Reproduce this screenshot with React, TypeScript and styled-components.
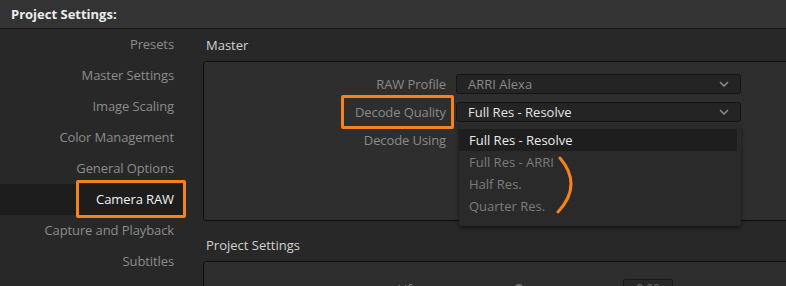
import styled, { createGlobalStyle } from 'styled-components';

const GlobalStyle = createGlobalStyle`
  html, body {
    margin: 0;
    padding: 0;
    background: #282828;
  }
  body {
    font-family: 'Open Sans', 'Noto Sans', sans-serif;
    -webkit-font-smoothing: antialiased;
  }
`;

const ORANGE = '#f5821f';

const SWindow = styled.div`
  display: flex;
  flex-direction: column;
  width: 786px;
  height: 286px;
  overflow: hidden;
  background: #282828;
`;

const STitleBar = styled.div`
  flex: 0 0 28px;
  display: flex;
  align-items: center;
  padding-left: 11px;
  background: #333333;
  border-bottom: 1px solid #141414;
  color: #ececec;
  font-size: 13px;
  font-weight: 700;
`;

const SBody = styled.div`
  flex: 1;
  display: flex;
  min-height: 0;
`;

const SSidebar = styled.ul`
  flex: 0 0 184px;
  margin: 0;
  padding: 0;
  list-style: none;
`;

const SSidebarItem = styled.li<{ $active?: boolean }>`
  height: 31px;
  padding-right: 10px;
  text-align: right;
  line-height: 31px;
  font-size: 13px;
  letter-spacing: -0.1px;
  color: ${({ $active }) => ($active ? '#f2f2f2' : '#8c8c8c')};
  background: ${({ $active }) => ($active ? '#1d1d1d' : 'transparent')};
`;

const SMarked = styled.span`
  position: relative;
  display: inline-block;
`;

const SMarkBox = styled.span<{ $l: number; $r: number; $t: number; $b: number }>`
  position: absolute;
  left: ${({ $l }) => $l}px;
  right: ${({ $r }) => $r}px;
  top: ${({ $t }) => $t}px;
  bottom: ${({ $b }) => $b}px;
  border: 3px solid ${ORANGE};
  border-radius: 2px;
  pointer-events: none;
`;

const SMain = styled.div`
  flex: 1;
  padding-left: 19px;
  min-width: 0;
`;

const SSectionTitle = styled.div<{ $top?: number }>`
  height: 32px;
  margin-top: ${({ $top }) => $top ?? 0}px;
  padding-left: 3px;
  line-height: 32px;
  font-size: 13px;
  color: #d2d2d2;
`;

const SGroup = styled.div<{ $height: number; $padTop: number }>`
  box-sizing: border-box;
  width: 620px;
  height: ${({ $height }) => $height}px;
  padding-top: ${({ $padTop }) => $padTop}px;
  background: #2e2e2e;
  border: 1px solid #0e0e0e;
  border-radius: 3px;
  display: flex;
  flex-direction: column;
  gap: 8px;
`;

const SRow = styled.div`
  display: flex;
  align-items: center;
  gap: 10px;
  height: 20px;
`;

const SLabel = styled.div<{ $width?: number }>`
  flex: 0 0 ${({ $width }) => $width ?? 242}px;
  text-align: right;
  font-size: 13px;
  letter-spacing: -0.1px;
  color: #8a8a8a;
`;

const SSelectWrap = styled.div`
  position: relative;
`;

const SSelect = styled.div<{ $bright?: boolean }>`
  box-sizing: border-box;
  display: flex;
  align-items: center;
  justify-content: space-between;
  width: 285px;
  height: 20px;
  padding: 0 11px;
  background: #242424;
  border: 1px solid #141414;
  border-radius: 3px;
  font-size: 13px;
  color: ${({ $bright }) => ($bright ? '#e4e4e4' : '#8a8a8a')};
`;

const SMenu = styled.ul`
  position: absolute;
  left: 3px;
  top: 22px;
  width: 282px;
  margin: 0;
  padding: 5px 0 9px;
  list-style: none;
  background: #2a2a2a;
  border-radius: 2px;
  box-shadow: 0 2px 4px rgba(0, 0, 0, 0.55);
  z-index: 2;
`;

const SMenuItem = styled.li<{ $active?: boolean }>`
  height: 22px;
  padding-left: 10px;
  margin-right: 4px;
  line-height: 22px;
  font-size: 13px;
  color: ${({ $active }) => ($active ? '#ececec' : '#7c7c7c')};
  background: ${({ $active }) => ($active ? '#1e1e1e' : 'transparent')};
`;

const SArc = styled.svg`
  position: absolute;
  left: 96px;
  top: 31px;
`;

const SSlider = styled.div`
  position: relative;
  flex: 0 0 187px;
  height: 20px;
  display: flex;
  align-items: center;
`;

const STrack = styled.div`
  width: 100%;
  height: 2px;
  background: #1f1f1f;
`;

const SKnob = styled.div`
  position: absolute;
  left: 88px;
  top: 5px;
  width: 10px;
  height: 10px;
  border-radius: 50%;
  background: #6e6e6e;
`;

const SValue = styled.div`
  box-sizing: border-box;
  width: 50px;
  height: 20px;
  border: 1px solid #1a1a1a;
  border-radius: 2px;
  background: #282828;
  text-align: center;
  line-height: 18px;
  font-size: 12px;
  color: #6a6a6a;
`;

const Chevron = () => (
  <svg width="10" height="6" viewBox="0 0 10 6">
    <path d="M1 1 L5 5 L9 1" fill="none" stroke="#8c8c8c" strokeWidth="1.5" />
  </svg>
);

const sidebarItems = [
  'Presets',
  'Master Settings',
  'Image Scaling',
  'Color Management',
  'General Options',
  'Camera RAW',
  'Capture and Playback',
  'Subtitles',
];

const qualityOptions = ['Full Res - Resolve', 'Full Res - ARRI', 'Half Res.', 'Quarter Res.'];

const App = () => {
  return (
    <>
      <GlobalStyle />
      <SWindow>
        <STitleBar>Project Settings:</STitleBar>
        <SBody>
          <SSidebar>
            {sidebarItems.map((item) => {
              const active = item === 'Camera RAW';
              return (
                <SSidebarItem key={item} $active={active}>
                  {active ? (
                    <SMarked>
                      {item}
                      <SMarkBox $l={-20} $r={-12} $t={-4} $b={-3} />
                    </SMarked>
                  ) : (
                    item
                  )}
                </SSidebarItem>
              );
            })}
          </SSidebar>

          <SMain>
            <SSectionTitle>Master</SSectionTitle>
            <SGroup $height={160} $padTop={12}>
              <SRow>
                <SLabel>RAW Profile</SLabel>
                <SSelect>
                  <span>ARRI Alexa</span>
                  <Chevron />
                </SSelect>
              </SRow>
              <SRow>
                <SLabel>
                  <SMarked>
                    Decode Quality
                    <SMarkBox $l={-14} $r={-8} $t={-8} $b={-8} />
                  </SMarked>
                </SLabel>
                <SSelectWrap>
                  <SSelect $bright>
                    <span>Full Res - Resolve</span>
                    <Chevron />
                  </SSelect>
                  <SMenu>
                    {qualityOptions.map((opt, i) => (
                      <SMenuItem key={opt} $active={i === 0}>
                        {opt}
                      </SMenuItem>
                    ))}
                    <SArc width="20" height="62" viewBox="0 0 20 62">
                      <path
                        d="M5 3 Q28 30 3 57"
                        fill="none"
                        stroke={ORANGE}
                        strokeWidth="3"
                        strokeLinecap="round"
                      />
                    </SArc>
                  </SMenu>
                </SSelectWrap>
              </SRow>
              <SRow>
                <SLabel>Decode Using</SLabel>
              </SRow>
            </SGroup>

            <SSectionTitle $top={8}>Project Settings</SSectionTitle>
            <SGroup $height={80} $padTop={17}>
              <SRow>
                <SLabel $width={212}>Lift</SLabel>
                <SSlider>
                  <STrack />
                  <SKnob />
                </SSlider>
                <SValue>0.00</SValue>
              </SRow>
            </SGroup>
          </SMain>
        </SBody>
      </SWindow>
    </>
  );
};

export default App;
